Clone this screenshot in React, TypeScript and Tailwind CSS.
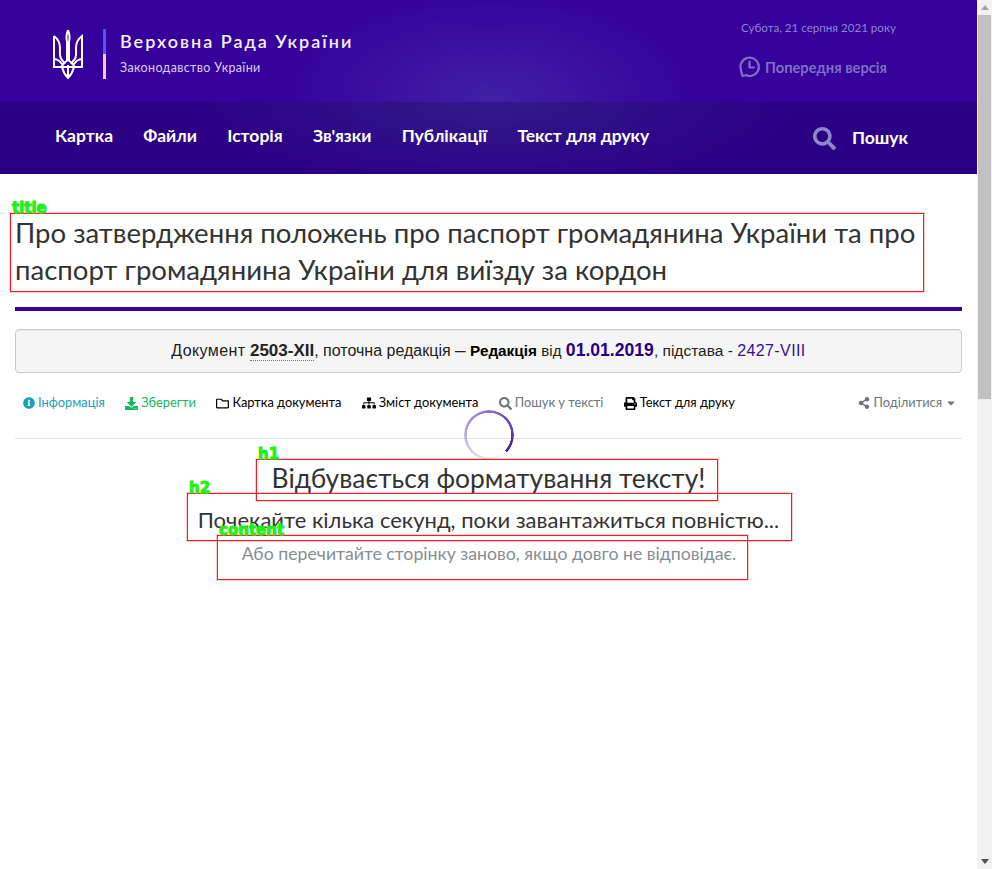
import React from "react";
import { FaInfoCircle, FaDownload, FaRegFolder, FaSitemap, FaSearch, FaPrint, FaShareAlt, FaCaretDown } from "react-icons/fa";

const Box = ({ l, t, w, h, label }: { l: number; t: number; w: number; h: number; label: string }) => (
  <div className="absolute border border-[#f01d24] shadow-[0_0_0_1px_rgba(240,29,36,0.22)] pointer-events-none" style={{ left: l, top: t, width: w, height: h }}>
    <span className="absolute left-[1px] top-[-13px] text-[15px] leading-[14px] font-bold text-[#22f016] [font-family:'DejaVu_Sans',sans-serif] [-webkit-text-stroke:1px_#22f016]">{label}</span>
  </div>
);

const Trident = () => (
  <svg width="30" height="50" viewBox="0 0 30 50" fill="none" stroke="#fff" strokeWidth="2" className="block">
    <path d="M15 1 C13 6 13 9 14 13 L14 31 M15 1 C17 6 17 9 16 13 L16 31" />
    <path d="M1 7 L1 38 L9 38 C10 42 12 46 15 49 C18 46 20 42 21 38 L29 38 L29 7 C25 10 23 14 23 19 C23 25 24 28 21 31 L18 35" />
    <path d="M1 7 C5 10 7 14 7 19 C7 25 6 28 9 31 L12 35 M1 30 C5 30 8 33 10 37 M29 30 C25 30 22 33 20 37 M15 31 C12 33 9 36 9 38 M15 31 C18 33 21 36 21 38 M9 38 L21 38 M15 36 L15 48" />
  </svg>
);

const HistoryIcon = () => (
  <svg width="21" height="22" viewBox="0 0 21 22" fill="none" stroke="#7e6fc4" strokeWidth="2.2" strokeLinecap="round" strokeLinejoin="round" className="block shrink-0">
    <path d="M2 14 A9.2 9.2 0 1 1 8.5 19.8" />
    <path d="M10.5 5.5 V11.5 H15" />
    <path d="M2 15 L3.5 20 L8 19" />
  </svg>
);

const Tool = ({ icon, text, cls }: { icon: React.ReactNode; text: string; cls: string }) => (
  <span className={`flex items-center gap-[3px] ${cls}`}>{icon}<span>{text}</span></span>
);

export default function App() {
  return (
    <div className="relative flex h-[869px] w-[992px] overflow-hidden bg-white [font-family:Lato,'Noto_Sans',sans-serif] text-[#333]">
      <div className="w-[977px] shrink-0">
        <header className="h-[102px] flex bg-[#36009a] bg-[radial-gradient(ellipse_220px_110px_at_490px_95px,#401fa6_0%,#3a109f_50%,#36009a_100%)]">
          <div className="pl-[53px] pt-[29px]"><Trident /></div>
          <div className="ml-[20px] mt-[29px] flex h-[50px] w-[3px] flex-col">
            <div className="h-[25px] bg-[#5a54ee]" />
            <div className="h-[25px] bg-[#f6c9b8]" />
          </div>
          <div className="ml-[14px] pt-[29px]">
            <div className="text-[18px] leading-[24px] font-semibold tracking-[2px] text-[#f4f0ff]">Верховна Рада України</div>
            <div className="mt-[6px] text-[12.5px] leading-[18px] tracking-[0.35px] text-[#d9cff5]">Законодавство України</div>
          </div>
          <div className="ml-auto mr-[81px] w-[155px] pt-[19px]">
            <div className="text-[11.6px] leading-[18px] text-[#8f85d6] whitespace-nowrap">Субота, 21 серпня 2021 року</div>
            <div className="ml-[-2px] mt-[19px] flex items-center gap-[5px] whitespace-nowrap">
              <HistoryIcon />
              <span className="text-[14.7px] leading-[18px] font-bold text-[#7e6fc4]">Попередня версія</span>
            </div>
          </div>
        </header>
        <nav className="h-[72px] flex items-center bg-[#2c0085] bg-[radial-gradient(ellipse_300px_90px_at_490px_0px,#301a8c_0%,#2c0085_100%)] pl-[55px] text-[17.5px] font-bold text-white">
          <div className="flex gap-[30.3px] mt-[-3px]">
            <span>Картка</span><span>Файли</span><span>Історія</span><span>Зв'язки</span><span>Публікації</span><span>Текст для друку</span>
          </div>
          <FaSearch className="ml-auto text-[#8d87c9]" size={23} />
          <span className="ml-[16px] mr-[69px]">Пошук</span>
        </nav>
        <main className="px-[15px]">
          <h1 className="mt-[40px] text-[27.55px] leading-[37px] text-[#333]">
            Про затвердження положень про паспорт громадянина України та про паспорт громадянина України для виїзду за кордон
          </h1>
          <div className="mt-[19px] h-[4px] bg-[#36009a]" />
          <div className="mt-[18px] h-[44px] pb-[2px] rounded-[4px] border border-[#ccc] bg-[#f5f5f5] shadow-[inset_0_1px_1px_rgba(0,0,0,0.05)] flex items-center justify-center text-[16px] text-[#222] [font-family:'Liberation_Sans',sans-serif]">
            <span>
              <span className="tracking-[0.4px]">Документ</span>{" "}
              <b className="text-[17px] border-b border-dotted border-[#777]">2503-XII</b>, поточна редакція <span className="text-[19px]">–</span>{" "}
              <b className="text-[15.3px] text-black">Редакція</b> <span className="text-[15px]">від</span>{" "}
              <b className="text-[17.6px] text-[#2b0080]">01.01.2019</b>
              <span className="text-[15.5px]">, підстава - </span>
              <span className="text-[#36109a] tracking-[0.4px]">2427-VIII</span>
            </span>
          </div>
          <div className="mt-[21px] flex items-center pl-[8px] h-[18px] text-[12.85px] gap-[20.4px]">
            <Tool icon={<FaInfoCircle size={12} />} text="Інформація" cls="text-[#17a2b8]" />
            <Tool icon={<FaDownload size={13} />} text="Зберегти" cls="text-[#14b85a]" />
            <Tool icon={<FaRegFolder size={13} />} text="Картка документа" cls="text-black" />
            <Tool icon={<FaSitemap size={14} />} text="Зміст документа" cls="text-black" />
            <Tool icon={<FaSearch size={13} />} text="Пошук у тексті" cls="text-[#6c757d]" />
            <Tool icon={<FaPrint size={13} />} text="Текст для друку" cls="text-black" />
            <span className="ml-auto mr-[5px] flex items-center gap-[3px] text-[#6c757d]"><FaShareAlt size={12} /><span>Поділитися</span><FaCaretDown size={12} /></span>
          </div>
          <div className="mt-[26px] border-t border-[#e3e3e3]" />
          <div className="relative text-center">
            <div className="absolute left-[449px] top-[-29px] h-[50px] w-[50px] rounded-full [background:conic-gradient(from_135deg,rgba(74,31,174,0)_0deg,rgba(74,31,174,0.22)_90deg,rgba(90,50,185,0.65)_210deg,#3f17a8_360deg)] [mask:radial-gradient(closest-side,transparent_22px,#000_22.5px)]" />
            <div className="pt-[20px] text-[26.4px] leading-[38px] text-[#333]">Відбувається форматування тексту!</div>
            <div className="mt-[4px] text-[22px] leading-[38px] text-[#333]">Почекайте кілька секунд, поки завантажиться повністю...</div>
            <div className="pl-[1px] text-[17.7px] leading-[30px] text-[#868e96]">Або перечитайте сторінку заново, якщо довго не відповідає.</div>
          </div>
        </main>
      </div>
      <div className="w-[15px] shrink-0 flex flex-col bg-[#f1f1f1]">
        <div className="h-[15px] flex items-center justify-center"><div className="border-x-[4px] border-b-[5px] border-x-transparent border-b-[#a3a3a3]" /></div>
        <div className="h-[384px] mx-[1px] w-[13px] bg-[#c1c1c1]" />
        <div className="mt-auto h-[15px] flex items-center justify-center"><div className="border-x-[4px] border-t-[5px] border-x-transparent border-t-[#505050]" /></div>
      </div>
      <Box l={10} t={213} w={914} h={79} label="title" />
      <Box l={256} t={459} w={462} h={42} label="h1" />
      <Box l={187} t={493} w={605} h={48} label="h2" />
      <Box l={217} t={535} w={531} h={45} label="content" />
    </div>
  );
}
